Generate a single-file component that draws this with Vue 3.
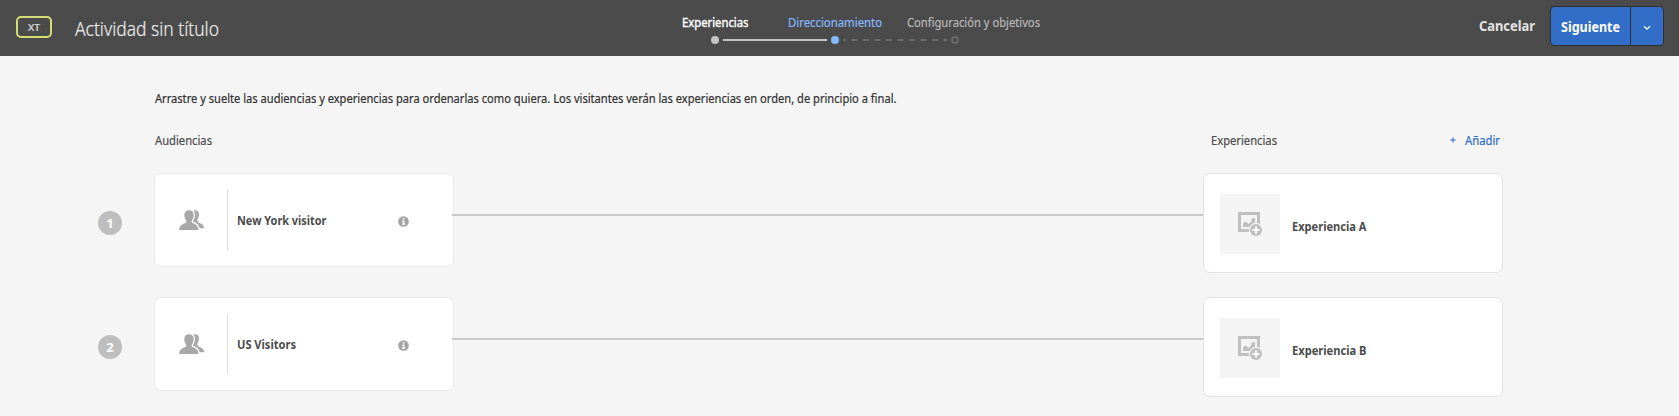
<script setup>
const steps = [
  { label: 'Experiencias', state: 'done', width: 66.5 },
  { label: 'Direccionamiento', state: 'current', width: 94 },
  { label: 'Configuración y objetivos', state: 'pending', width: 133 },
]

const rows = [
  { id: 1, audience: 'New York visitor', audienceWidth: 89.5, experience: 'Experiencia A', experienceWidth: 74.5 },
  { id: 2, audience: 'US Visitors', audienceWidth: 59, experience: 'Experiencia B', experienceWidth: 74.5 },
]

// Condenses a label horizontally so that it takes exactly the given width.
const vFit = {
  mounted(el, { value }) {
    const natural = el.getBoundingClientRect().width
    el.style.transform = `scaleX(${value / natural})`
    el.style.marginRight = `${value - natural}px`
  },
}
</script>

<template>
  <div class="page">
    <header class="topbar">
      <span class="badge"><span v-fit="12" class="fit">XT</span></span>
      <h1 class="title"><span v-fit="144" class="fit">Actividad sin título</span></h1>

      <nav class="steps">
        <div class="step-labels">
          <span v-for="s in steps" :key="s.label" class="step" :class="s.state">
            <span v-fit="s.width" class="fit">{{ s.label }}</span>
          </span>
        </div>
        <svg class="track" width="248" height="8" viewBox="0 0 248 8">
          <circle cx="4" cy="4" r="4" fill="#c3c3c3" />
          <path d="M12 4H116" stroke="#c3c3c3" stroke-width="2" />
          <circle cx="124" cy="4" r="4" fill="#87b9ff" />
          <path d="M132 4H135M140.5 4H236" stroke="#6b6b6b" stroke-width="2" stroke-dasharray="6 5.5" />
          <circle cx="244" cy="4" r="3" fill="none" stroke="#6b6b6b" stroke-width="2" />
        </svg>
      </nav>

      <div class="actions">
        <button class="cancel"><span v-fit="56" class="fit">Cancelar</span></button>
        <div class="split">
          <button class="next"><span v-fit="59" class="fit">Siguiente</span></button>
          <button class="more">
            <svg width="8" height="6" viewBox="0 0 8 6">
              <path d="M1 1.2L4 4.2L7 1.2" fill="none" stroke="#fff" stroke-width="1.3" />
            </svg>
          </button>
        </div>
      </div>
    </header>

    <main class="content">
      <p class="intro">
        <span v-fit="741.5" class="fit">Arrastre y suelte las audiencias y experiencias para ordenarlas como quiera. Los visitantes verán las experiencias en orden, de principio a final.</span>
      </p>

      <div class="heads">
        <span v-fit="57" class="fit">Audiencias</span>
        <span class="head-right">
          <span v-fit="66" class="fit">Experiencias</span>
          <a class="add">
            <svg width="6" height="6" viewBox="0 0 6 6">
              <path d="M3 .3V5.7M.3 3H5.7" stroke="#2d6bc9" stroke-width="1" />
            </svg>
            <span v-fit="35" class="fit">Añadir</span>
          </a>
        </span>
      </div>

      <section v-for="r in rows" :key="r.id" class="row">
        <span class="number">{{ r.id }}</span>

        <article class="card audience">
          <svg class="people" width="25" height="20" viewBox="0 0 25 20">
            <path
              d="M14.5 .5C18 -.2 20 1.6 20 4.6C20 7 19.2 8.2 18.6 9.3C18 10.8 18.4 11.9 19.6 12.4C22.6 13.7 25 14.6 25 18.2H19L13 12V2Z"
              fill="#a8a8a8"
            />
            <path
              d="M10 .3C13 .3 14.7 2.2 14.7 5C14.7 7.4 13.9 9 13 10.3C12.4 11.2 12.6 12.5 13.5 12.9C17 14.3 19.4 15.5 19.4 20H.2C.2 15.5 2.8 14.3 6.5 12.9C7.4 12.5 7.6 11.2 7 10.3C6.1 9 5.3 7.4 5.3 5C5.3 2.2 7.1 .3 10 .3Z"
              fill="#a8a8a8"
              stroke="#fff"
              stroke-width="2.6"
              paint-order="stroke"
            />
          </svg>
          <div class="audience-body">
            <span class="name"><span v-fit="r.audienceWidth" class="fit">{{ r.audience }}</span></span>
            <svg class="info" width="11" height="11" viewBox="0 0 11 11">
              <circle cx="5.5" cy="5.5" r="5.3" fill="#a4a4a4" />
              <path d="M4.7 2H6.5V3.6H4.7ZM4 4.6H6.4V7.6H7.2V8.7H4V7.6H4.8V5.6H4Z" fill="#fff" />
            </svg>
          </div>
        </article>

        <span class="connector"></span>

        <article class="card experience">
          <div class="thumb">
            <svg width="24" height="24" viewBox="0 0 24 24">
              <path d="M0 0H22V14H19V3H3V17H13V20H0Z" fill="#bfbfbf" />
              <path
                d="M5 15V11.8C6 9.8 7.8 9.3 9 10.5L10.6 11.9L13.4 9.2C13 7.5 13.8 6 15.4 6C17 6 17.6 7.5 17 9V15Z"
                fill="#bfbfbf"
              />
              <circle cx="18" cy="18" r="7.2" fill="#f4f4f4" />
              <circle cx="18" cy="18" r="6" fill="#bfbfbf" />
              <path d="M18 14.4V21.6M14.4 18H21.6" stroke="#fff" stroke-width="2" />
            </svg>
          </div>
          <span class="name"><span v-fit="r.experienceWidth" class="fit">{{ r.experience }}</span></span>
        </article>
      </section>
    </main>
  </div>
</template>

<style>
body {
  margin: 0;
  background: #f5f5f5;
}
</style>

<style scoped>
.page {
  height: 416px;
  overflow: hidden;
  background: #f5f5f5;
  color: #4b4b4b;
  font: 13px/20px "Noto Sans", "Open Sans", sans-serif;
}

.fit {
  display: inline-block;
  white-space: nowrap;
  transform-origin: 0 50%;
}

button {
  border: 0;
  padding: 0;
  background: none;
  font: inherit;
  color: inherit;
}

.topbar {
  display: flex;
  align-items: flex-start;
  height: 56px;
  background: #4b4b4b;
}

.badge {
  box-sizing: border-box;
  width: 36px;
  height: 22px;
  margin: 16px 0 0 16px;
  padding-left: 10px;
  border: 2px solid #d3dc75;
  border-radius: 5px;
  color: #d6d6d6;
  font-size: 9.5px;
  font-weight: 500;
  line-height: 19px;
  -webkit-text-stroke: 0.2px;
}

.title {
  width: 607px;
  margin: 14px 0 0 23px;
  color: #ececec;
  font-size: 20px;
  font-weight: 300;
  line-height: 30px;
  -webkit-text-stroke: 0.2px #ececec;
}

.steps {
  padding-top: 12px;
}

.step-labels {
  display: flex;
  -webkit-text-stroke: 0.2px;
}

.step.done {
  width: 106px;
  color: #fff;
  -webkit-text-stroke: 0.4px;
}

.step.current {
  width: 119px;
  color: #87b9ff;
}

.step.pending {
  color: #b8b8b8;
}

.track {
  display: block;
  margin: 4px 0 0 29px;
}

.actions {
  display: flex;
  margin-left: auto;
  padding: 6px 15px 0 0;
  font-size: 14px;
  font-weight: 700;
}

.cancel {
  display: block;
  height: 39px;
  margin-right: 15px;
  color: #e3e3e3;
}

.split {
  display: flex;
  box-sizing: border-box;
  width: 114px;
  height: 40px;
  border: 1px solid #2f2f2f;
  border-radius: 4px;
  background: #326ec8;
  color: #fff;
}

.next {
  width: 80px;
  padding: 1px 0 0 10px;
  border-right: 1px solid #2f2f2f;
  text-align: left;
}

.more {
  display: flex;
  flex: 1;
  align-items: center;
  justify-content: center;
  padding-top: 4px;
}

.content {
  padding: 32px 0 0 98px;
}

.intro {
  margin: 0 0 22px 56.6px;
  color: #2f2f2f;
  -webkit-text-stroke: 0.2px;
}

.heads {
  display: flex;
  justify-content: space-between;
  width: 1345.4px;
  margin: 0 0 23px 56.6px;
  -webkit-text-stroke: 0.2px;
}

.head-right {
  display: flex;
  justify-content: space-between;
  width: 289px;
}

.add {
  display: flex;
  align-items: center;
  gap: 9px;
  color: #2d6bc9;
}

.row {
  display: flex;
  align-items: flex-start;
  width: 1405px;
  height: 100px;
  margin-bottom: 24px;
}

.number {
  width: 24px;
  height: 24px;
  margin: 38px 32px 0 0;
  border-radius: 50%;
  background: #bebebe;
  color: #fff;
  font-weight: 700;
  line-height: 24px;
  text-align: center;
}

.card {
  display: flex;
  box-sizing: border-box;
  border: 1px solid #e3e3e3;
  border-radius: 7px;
  background: #fff;
  font-weight: 700;
}

.audience {
  width: 300px;
  height: 94px;
  padding: 16px 0 0 24px;
  border-color: #eaeaea;
}

.people {
  margin-top: 20px;
}

.audience-body {
  display: flex;
  flex: 1;
  height: 60px;
  margin-left: 23px;
  padding-left: 8.5px;
  border-left: 1px solid #e0e0e0;
}

.audience-body .name {
  width: 161.5px;
  margin-top: 20px;
}

.info {
  margin-top: 26px;
}

.connector {
  flex: 1;
  height: 2px;
  margin: 41px 0 0 -2px;
  background: #c9c9c9;
}

.experience {
  width: 300px;
  height: 100px;
  padding: 20px 0 0 16px;
}

.thumb {
  box-sizing: border-box;
  width: 60px;
  height: 60px;
  padding: 18px;
  background: #f4f4f4;
}

.thumb svg {
  display: block;
}

.experience .name {
  margin: 22px 0 0 11.5px;
}
</style>
